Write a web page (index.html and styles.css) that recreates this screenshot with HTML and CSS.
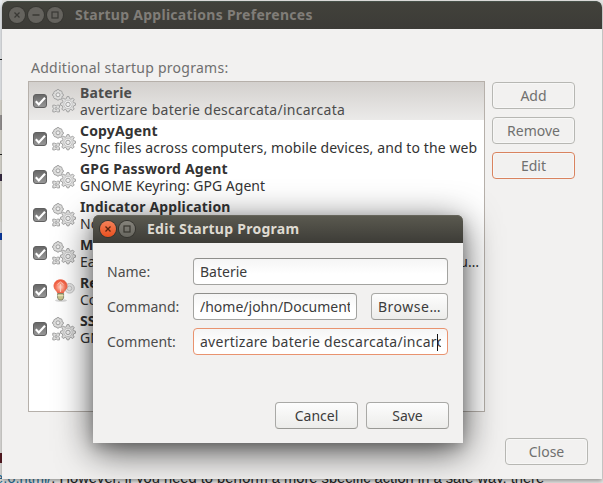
FILE: index.html
```
<!DOCTYPE html>
<html lang="en">
<head>
<meta charset="utf-8">
<title>Startup Applications Preferences</title>
<link rel="stylesheet" href="styles.css">
</head>
<body>
<svg class="defs" width="0" height="0" aria-hidden="true">
  <defs>
    <linearGradient id="boxfill" x1="0" y1="0" x2="0" y2="1"><stop offset="0" stop-color="#666"/><stop offset="1" stop-color="#999"/></linearGradient>
    <radialGradient id="bulbfill" cx=".5" cy=".55" r=".55"><stop offset="0" stop-color="#ffd9cc"/><stop offset=".5" stop-color="#fb8c73"/><stop offset="1" stop-color="#f04a2c"/></radialGradient>
    <symbol id="check" viewBox="0 0 14 14">
      <rect x=".5" y=".5" width="13" height="13" rx="2.5" fill="url(#boxfill)" stroke="#606060"/>
      <path d="M2.8 7.2 5.8 10.4 12 3.7" fill="none" stroke="#fff" stroke-width="2.1"/>
    </symbol>
    <symbol id="gears" viewBox="0 0 24 24">
      <g fill="#dededd" stroke="#a2a2a2" stroke-width="1">
        <path d="M5 .6h2l.6 1.3 1.6-.2 1 1.5-.3 1.3 1.4.7v1.7l-1.4.8.2 1.3-1.2 1.3-1.4-.2L7 11H5l-.7-1.2-1.4.2-1.2-1.3.2-1.3L.6 6.7V5L2 4.4l-.2-1.3 1.2-1.3 1.4.2z"/>
        <path d="M15 7.6h2l.5 2 1.4.6 1.8-1.1 1.5 1.5-1.1 1.8.6 1.3 1.8.5v2l-1.8.6-.6 1.4 1.1 1.8-1.5 1.5-1.8-1.1-1.4.6-.5 1.8h-2l-.6-1.8-1.3-.6-1.9 1.1-1.4-1.5 1-1.8-.5-1.4-1.8-.6v-2l1.8-.5.5-1.3-1-1.8 1.4-1.5 1.9 1.1 1.3-.6z"/>
        <path d="M.8 16.2h2l1.4.8 1.3-.8h2v2l-.8 1.4.8 1.3v2h-2l-1.3-.8-1.4.8h-2v-2l.8-1.3-.8-1.4z"/>
      </g>
      <g fill="#eee" stroke="#a2a2a2"><circle cx="6" cy="5.8" r="2"/><circle cx="16" cy="15.4" r="4.2" stroke="#c2c2c2"/><circle cx="16" cy="15.4" r="2.2"/><circle cx="4.1" cy="19.5" r="1"/></g>
    </symbol>
    <symbol id="bulb" viewBox="0 0 24 24">
      <ellipse cx="9" cy="21.5" rx="6" ry="1.3" fill="#bbb" opacity=".6"/>
      <circle cx="17.5" cy="9.3" r="4.8" fill="#e8e8e8" stroke="#c2c2c2"/>
      <circle cx="17.5" cy="9.3" r="2.3" fill="none" stroke="#c4c4c4"/>
      <path d="M8.5.8C4.6.8 2 3.6 2 7.1c0 3.5 3 4.400 3.7 6.900h5.6c.7-2.500 3.7-3.400 3.700-6.900C15 3.600 12.400.8 8.500.8z" fill="url(#bulbfill)" stroke="#f0694d"/>
      <path d="M5.500 5.600 8.500 3l3 2.600M8.500 5v8" fill="none" stroke="#ffd5c8" stroke-width=".9"/>
      <path d="M5.600 14.500h6v4.500l-1.500 2h-3l-1.500-2z" fill="#c9c48c" stroke="#77755a" stroke-width=".8"/>
      <path d="M5.500 16.700h6" stroke="#f1efc9"/>
    </symbol>
    <symbol id="x" viewBox="0 0 16 16"><path d="M5.500 5.500l5 5m0-5-5 5" fill="none" stroke="currentColor" stroke-width="1.300"/></symbol>
    <symbol id="min" viewBox="0 0 16 16"><path d="M4.500 8h7" stroke="currentColor" stroke-width="1.300"/></symbol>
    <symbol id="max" viewBox="0 0 16 16"><rect x="5" y="5" width="6" height="6" fill="none" stroke="currentColor" stroke-width="1.200"/></symbol>
  </defs>
</svg>

<div class="page-left"><i class="m1"></i><i class="m2"></i><i class="m3"></i><i class="m4"></i><i class="m5"></i><i class="m6"></i></div>
<p class="page-text"><a>e.6.html/</a>. However, if you need to perform a more specific action in a safe way, there</p>

<main class="window">
  <header class="titlebar inactive">
    <svg class="ctl"><use href="#x"/></svg><svg class="ctl"><use href="#min"/></svg><svg class="ctl"><use href="#max"/></svg>
    <h1>Startup Applications Preferences</h1>
  </header>
  <div class="content">
    <div class="label">Additional startup programs:</div>
    <div class="columns">
      <ul class="list">
        <li class="row selected"><svg class="check"><use href="#check"/></svg><svg class="icon"><use href="#gears"/></svg><div><b>Baterie</b><span class="wide">avertizare baterie descarcata/incarcata</span></div></li>
        <li class="row"><svg class="check"><use href="#check"/></svg><svg class="icon"><use href="#gears"/></svg><div><b>CopyAgent</b><span class="medium">Sync files across computers, mobile devices, and to the web</span></div></li>
        <li class="row"><svg class="check"><use href="#check"/></svg><svg class="icon"><use href="#gears"/></svg><div><b>GPG Password Agent</b><span>GNOME Keyring: GPG Agent</span></div></li>
        <li class="row"><svg class="check"><use href="#check"/></svg><svg class="icon"><use href="#gears"/></svg><div><b>Indicator Application</b><span>No</span></div></li>
        <li class="row"><svg class="check"><use href="#check"/></svg><svg class="icon"><use href="#gears"/></svg><div><b>M</b><span class="split"><span>Ea</span><span>u…</span></span></div></li>
        <li class="row"><svg class="check"><use href="#check"/></svg><svg class="icon"><use href="#bulb"/></svg><div><b>Re</b><span>Co</span></div></li>
        <li class="row"><svg class="check"><use href="#check"/></svg><svg class="icon"><use href="#gears"/></svg><div><b>SS</b><span>GN</span></div></li>
      </ul>
      <div class="side">
        <button class="btn dim">Add</button>
        <button class="btn dim">Remove</button>
        <button class="btn dim focus">Edit</button>
      </div>
    </div>
    <div class="footer"><button class="btn dim">Close</button></div>
  </div>
</main>

<section class="dialog">
  <header class="titlebar">
    <svg class="ctl close"><use href="#x"/></svg><svg class="ctl"><use href="#max"/></svg>
    <h2>Edit Startup Program</h2>
  </header>
  <div class="form">
    <div class="field"><label>Name:</label><div class="entry">Baterie</div></div>
    <div class="field"><label>Command:</label><div class="entry"><span class="clip">/home/john/Documents</span></div><button class="btn browse">Browse…</button></div>
    <div class="field"><label>Comment:</label><div class="entry focus"><span class="clip wide">avertizare baterie descarcata/incar<i class="caret"></i>cata</span></div></div>
  </div>
  <div class="actions"><button class="btn">Cancel</button><button class="btn">Save</button></div>
</section>
</body>
</html>
```
FILE: styles.css
```
* { box-sizing: border-box; }
body {
  margin: 0; width: 603px; height: 483px; overflow: hidden; position: relative;
  display: flow-root; background: #e4e4e2;
  font: 14px/17px "Noto Sans", "Open Sans", sans-serif; color: #3c3c3c;
}
.defs { position: absolute; }
h1, h2, ul, p { margin: 0; padding: 0; }

.page-left { position: absolute; left: 0; top: 0; width: 2px; height: 483px; background: linear-gradient(#e9ecef 0 100px, #dcdad2 100px 222px, #e1e0dd 222px); }
.page-left i { position: absolute; left: 0; width: 2px; }
.m1 { top: 59px; height: 1px; background: #222; }
.m2 { top: 115px; height: 15px; background: #9a9696; }
.m3 { top: 154px; height: 1px; background: #222; }
.m4 { top: 174px; height: 7px; background: #372b43; }
.m5 { top: 233px; height: 7px; background: #0b3ca5; }
.m6 { top: 453px; height: 10px; background: #571b22; }
.page-text {
  position: absolute; left: -5px; top: 471px; white-space: nowrap;
  font: 14.7px/15px "Liberation Sans", sans-serif; color: #222;
}
.page-text a { color: #246a91; }

.window { position: relative; width: 600px; height: 478px; margin: 1px 0 0 2px; display: flex; flex-direction: column; background: #f2f1f0; border-radius: 6px 6px 0 0; box-shadow: 0 2px 4px rgba(0,0,0,.35); overflow: hidden; }
.titlebar { flex: none; height: 28px; display: flex; align-items: center; gap: 3px; padding-left: 7px; color: #dfdbd2; border-radius: 6px 6px 0 0; background: linear-gradient(#5b5a50, #3d3c37); box-shadow: inset 0 1px #66655b; }
.titlebar.inactive { color: #807d78; background: linear-gradient(#42423b, #3c3b37); box-shadow: inset 0 1px #48524a; }
.titlebar h1, .titlebar h2 { margin-left: 9px; font-size: 14px; line-height: 20px; font-weight: 700; white-space: nowrap; letter-spacing: .27px; }
.ctl { width: 16px; height: 16px; border-radius: 50%; background: linear-gradient(#85837b, #67665f); color: #37362f; box-shadow: 0 0 0 1px #35342f; }
.inactive .ctl { background: #65635e; color: #3a3935; box-shadow: 0 0 0 1px #383733; }
.ctl.close { background: linear-gradient(#f58159, #e9501f); color: #5a2410; }

.content { flex: 1; display: flex; flex-direction: column; padding: 30px 26px 14px; }
.label { height: 22px; padding-left: 3px; color: #6f6f6f; line-height: 18px; letter-spacing: .26px; }
.columns { display: flex; gap: 7px; }
.list { list-style: none; width: 457px; height: 331px; border: 1px solid #b6b0aa; background: #fff; }
.row { height: 38px; display: flex; align-items: center; padding-left: 4px; color: #333; }
.row.selected { color: #4c4c4c; background: linear-gradient(#d3d0cd, #ebeae9); }
.check { width: 14px; height: 14px; }
.icon { width: 24px; height: 24px; margin: 0 4px 0 5px; }
.row div { flex: 1; white-space: nowrap; }
.row b, .row div > span { display: block; line-height: 17px; }
.row b { letter-spacing: .15px; }
.wide { letter-spacing: .26px; }
.medium { letter-spacing: .1px; }
.row .split { display: flex; justify-content: space-between; padding-right: 5px; }
.side { display: flex; flex-direction: column; gap: 8px; padding-top: 1px; }
.btn { width: 83px; height: 27px; padding: 0; font: inherit; line-height: 20px; color: #3c3c3c; border: 1px solid #a9a9a6; border-bottom-color: #999995; border-radius: 4px; background: linear-gradient(#fdfdfd, #ececea); }
.btn.dim { color: #70706f; border-color: #b7b7b3; background: #f2f1f0; box-shadow: inset 0 0 0 1px #f7f7f6; }
.btn.dim.focus { border-color: #d9835f; }
.footer { margin-top: auto; display: flex; justify-content: flex-end; margin-right: -12px; }

.dialog { position: absolute; left: 93px; top: 215px; width: 370px; height: 228px; display: flex; flex-direction: column; background: #f2f1f0; border-radius: 6px 6px 0 0; box-shadow: 0 8px 36px rgba(0,0,0,.7), 0 4px 12px rgba(0,0,0,.16); }
.form { display: flex; flex-direction: column; gap: 8px; padding: 15px 15px 0 14px; }
.field { display: flex; align-items: center; height: 27px; }
label { width: 86px; color: #4c4c4c; }
.entry { flex: 1; min-width: 0; height: 27px; padding: 3px 6px; line-height: 19px; border: 1px solid #a3a3a0; border-top-color: #8e8e8b; border-radius: 4px; background: linear-gradient(#f5f5f5, #fff 60%); }
.entry.focus { border-color: #e9936f; }
.clip { display: block; overflow: hidden; white-space: nowrap; }
.caret { display: inline-block; width: 1px; height: 17px; margin-right: -1px; vertical-align: -4px; background: #111; }
.browse { width: 77px; margin-left: 14px; letter-spacing: .5px; }
.actions { margin-top: auto; display: flex; justify-content: flex-end; gap: 8px; padding: 0 14px 14px; }
```
